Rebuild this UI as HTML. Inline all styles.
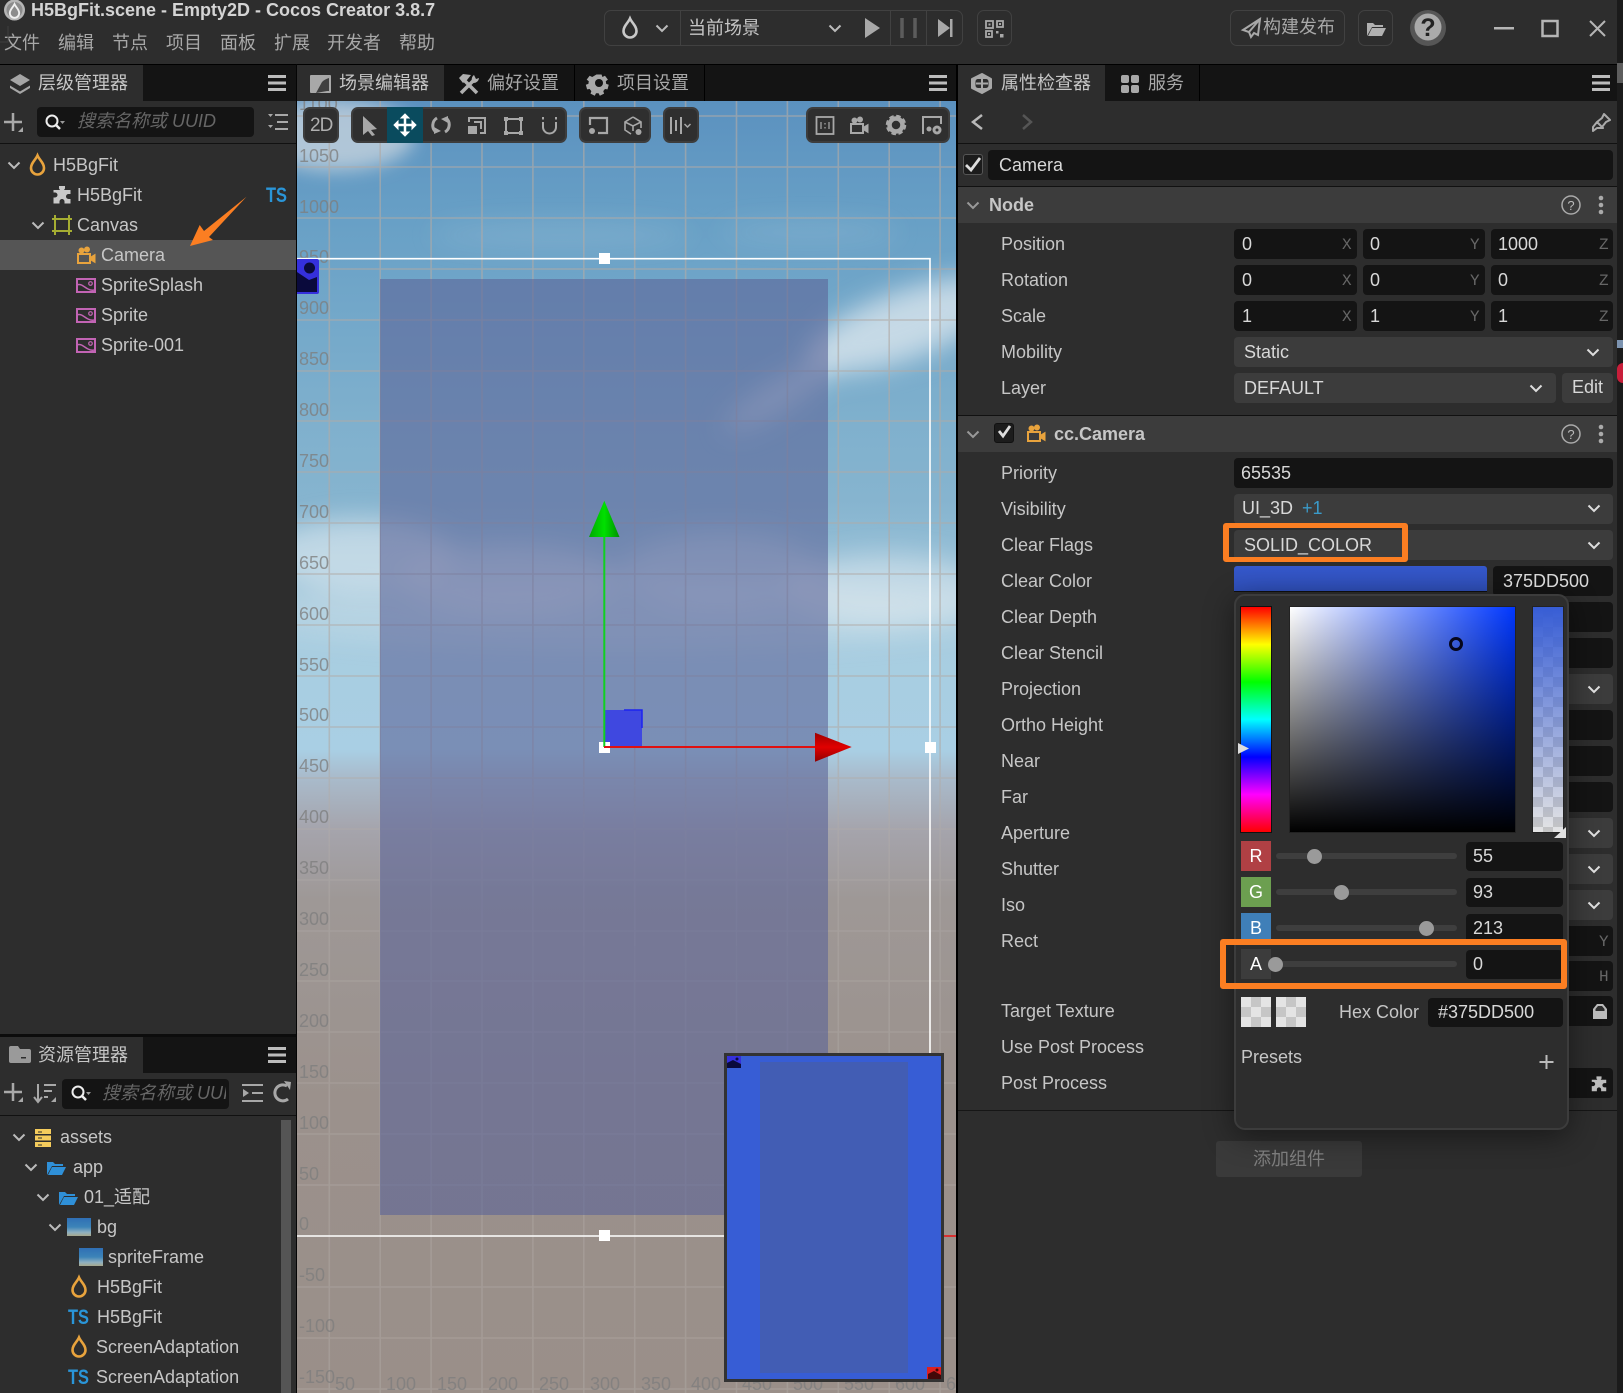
<!DOCTYPE html>
<html><head><meta charset="utf-8"><title>H5BgFit.scene - Cocos Creator</title>
<style>
html,body{margin:0;padding:0;width:1623px;height:1393px;overflow:hidden;background:#2d2d2d}
body{position:relative;font:18px/20px "Liberation Sans","Noto Sans CJK SC",sans-serif;color:#c6c6c6}
.a{position:absolute}
.t{position:absolute;white-space:nowrap;line-height:20px}
.f{position:absolute;background:#141414;border-radius:4px;height:30px}
.s{position:absolute;background:#3c3c3c;border-radius:4px;height:30px}
.v{color:#d8d8d8}
.m{font-family:"Liberation Mono",monospace;font-size:16px;color:#666}
.w{color:#a8a8a8}
.g{position:absolute;background:#2f2f2f;border:2px solid #3d3d3d;border-radius:7px;box-sizing:border-box;height:36px;top:107px}
.b{position:absolute;border:1px solid #414141;border-radius:7px;box-sizing:border-box}
.sl{position:absolute;left:1276px;width:181px;height:6px;background:#3e3e3e;border-radius:3px}
.th{position:absolute;width:15px;height:15px;border-radius:50%;background:#9a9a9a}
.ck{background:conic-gradient(#c6c6c6 25%,#e4e4e4 0 50%,#c6c6c6 0 75%,#e4e4e4 0);background-size:20px 20px}
svg{position:absolute;left:0;top:0;overflow:visible}
</style></head><body>

<!-- bars -->
<div class="a" style="left:0;top:0;width:1617px;height:64px;background:#2d2d2d"></div>
<div class="a" style="left:1617px;top:0;width:6px;height:1393px;background:#1b1b1b"></div>
<div class="a" style="left:1617px;top:63px;width:6px;height:20px;background:#8a8a8a;opacity:.6"></div>
<div class="a" style="left:1617px;top:340px;width:6px;height:8px;background:#7c93b0"></div>
<div class="a" style="left:1617px;top:363px;width:6px;height:20px;background:#c81e3a;border-radius:10px 0 0 10px"></div>
<div class="a" style="left:0;top:64px;width:1617px;height:37px;background:#141414;border-top:1px solid #000;box-sizing:border-box"></div>

<!-- left panels -->
<div class="a" style="left:0;top:101px;width:296px;height:1292px;background:#2d2d2d"></div>
<div class="a" style="left:0;top:65px;width:143px;height:36px;background:#2d2d2d"></div>
<div class="a" style="left:0;top:143px;width:296px;height:1px;background:#111"></div>
<div class="a" style="left:0;top:240px;width:296px;height:30px;background:#555"></div>
<div class="a" style="left:0;top:1034px;width:296px;height:3px;background:#0c0c0c"></div>
<div class="a" style="left:0;top:1037px;width:296px;height:36px;background:#141414"></div>
<div class="a" style="left:0;top:1037px;width:143px;height:36px;background:#2d2d2d"></div>
<div class="a" style="left:0;top:1115px;width:296px;height:1px;background:#111"></div>
<div class="f" style="left:37px;top:107px;width:217px"></div>
<div class="f" style="left:62px;top:1079px;width:167px"></div>
<div class="a" style="left:281px;top:1120px;width:10px;height:273px;background:#555"></div>
<div class="a" style="left:296px;top:64px;width:1px;height:1329px;background:#050505"></div>

<!-- scene tabs -->
<div class="a" style="left:297px;top:65px;width:147px;height:36px;background:#2d2d2d"></div>
<div class="a" style="left:574px;top:65px;width:1px;height:36px;background:#000"></div>
<div class="a" style="left:704px;top:65px;width:1px;height:36px;background:#000"></div>

<!-- scene -->
<div class="a" style="left:297px;top:101px;width:659px;height:1292px;overflow:hidden;background:linear-gradient(180deg,#5b91bf 0,#68a0c6 119px,#7fb0cd 319px,#86b4cf 399px,#a8cde0 539px,#a9cfe4 649px,#a9bccd 674px,#a5a4ac 729px,#9e9896 799px,#9b918c 999px,#9a8f89 1292px)">
<svg width="659" height="1292" viewBox="297 101 659 1292" style="font-family:'Liberation Sans',sans-serif">
<defs>
<filter id="b1" x="-50%" y="-80%" width="200%" height="260%"><feGaussianBlur stdDeviation="13"/></filter>
<filter id="b2" x="-50%" y="-50%" width="200%" height="200%"><feGaussianBlur stdDeviation="9"/></filter>
<linearGradient id="gc" x1="0" x2="1" y1="0" y2="0"><stop offset="0" stop-color="#00a800"/><stop offset=".5" stop-color="#00e000"/><stop offset="1" stop-color="#009000"/></linearGradient>
<linearGradient id="rc" x1="0" x2="0" y1="0" y2="1"><stop offset="0" stop-color="#a00000"/><stop offset=".5" stop-color="#e00000"/><stop offset="1" stop-color="#900000"/></linearGradient>
<linearGradient id="gl" gradientUnits="userSpaceOnUse" x1="0" x2="0" y1="101" y2="1393"><stop offset="0" stop-color="#b0aaa6" stop-opacity=".65"/><stop offset=".5" stop-color="#b0aaa6" stop-opacity=".6"/><stop offset=".58" stop-color="#b4aeaa" stop-opacity=".35"/><stop offset="1" stop-color="#b4aeaa" stop-opacity=".4"/></linearGradient>
</defs>
<g filter="url(#b2)">
<ellipse cx="335" cy="135" rx="80" ry="36" fill="#e6e6e6" opacity=".6"/>
</g>
<g filter="url(#b1)" fill="#e8eef2">
<ellipse cx="560" cy="235" rx="130" ry="12" opacity=".14"/>
<ellipse cx="810" cy="232" rx="90" ry="10" opacity=".14"/>
<ellipse cx="905" cy="325" rx="105" ry="34" opacity=".7" transform="rotate(-20 905 325)"/>
<ellipse cx="780" cy="395" rx="65" ry="16" opacity=".5" transform="rotate(-32 780 395)"/>
<ellipse cx="360" cy="555" rx="95" ry="36" opacity=".55"/>
<ellipse cx="510" cy="580" rx="110" ry="36" opacity=".5"/>
<ellipse cx="720" cy="572" rx="100" ry="40" opacity=".42"/>
<ellipse cx="885" cy="590" rx="100" ry="36" opacity=".5"/>
<ellipse cx="620" cy="612" rx="380" ry="34" opacity=".3"/>
</g>
<path d="M329.3 101V1393M380.2 101V1393M431.1 101V1393M482 101V1393M532.9 101V1393M583.8 101V1393M634.7 101V1393M685.6 101V1393M736.5 101V1393M787.4 101V1393M838.3 101V1393M889.2 101V1393M940.1 101V1393M297 116H956M297 167H956M297 218H956M297 269H956M297 320H956M297 371H956M297 421H956M297 472H956M297 523H956M297 574H956M297 625H956M297 676H956M297 727H956M297 778H956M297 829H956M297 880H956M297 931H956M297 981H956M297 1032H956M297 1083H956M297 1134H956M297 1185H956M297 1287H956M297 1338H956M297 1389H956" stroke="url(#gl)" stroke-width="1.600" fill="none"/>
<g fill="#7d7d7d" fill-opacity=".78" font-size="18">
<text x="299" y="110">1100</text><text x="299" y="162">1050</text><text x="299" y="213">1000</text><text x="299" y="263">950</text><text x="299" y="314">900</text><text x="299" y="365">850</text><text x="299" y="416">800</text><text x="299" y="467">750</text><text x="299" y="518">700</text><text x="299" y="569">650</text><text x="299" y="620">600</text><text x="299" y="671">550</text><text x="299" y="721">500</text><text x="299" y="772">450</text><text x="299" y="823">400</text><text x="299" y="874">350</text><text x="299" y="925">300</text><text x="299" y="976">250</text><text x="299" y="1027">200</text><text x="299" y="1078">150</text><text x="299" y="1129">100</text><text x="299" y="1180">50</text><text x="299" y="1230">0</text><text x="299" y="1281">-50</text><text x="299" y="1332">-100</text><text x="299" y="1383">-150</text>
<text x="335" y="1390">50</text><text x="386" y="1390">100</text><text x="437" y="1390">150</text><text x="488" y="1390">200</text><text x="539" y="1390">250</text><text x="590" y="1390">300</text><text x="641" y="1390">350</text><text x="691" y="1390">400</text><text x="742" y="1390">450</text><text x="793" y="1390">500</text><text x="844" y="1390">550</text><text x="895" y="1390">600</text><text x="946" y="1390">650</text>
</g>
<rect x="380" y="279" width="448" height="936" fill="#5c6498" fill-opacity=".6"/>
<!-- canvas rect -->
<path d="M297 258.700H930V1060M297 1236H730" stroke="#fff" stroke-width="1.600" fill="none"/>
<path d="M944 1236H956" stroke="#d83030" stroke-width="2"/>
<rect x="599" y="253" width="11" height="11" fill="#fff"/>
<rect x="925" y="742" width="11" height="11" fill="#fff"/>
<rect x="599" y="1230" width="11" height="11" fill="#fff"/>
<!-- left blue sprite icon -->
<rect x="296" y="259" width="23" height="35" rx="2" fill="#3530dc"/>
<path d="M297 272L309 280L317 277V292H297Z" fill="#0a0a3c"/><circle cx="309.500" cy="268" r="5.500" fill="#0a0a3c"/>
<!-- gizmo -->
<rect x="605" y="710" width="37" height="37" fill="#3f48e0"/>
<path d="M624 710H642V728" stroke="#1c22f0" stroke-width="1.500" fill="none"/>
<rect x="599" y="742" width="11" height="11" fill="#fff"/>
<path d="M604.300 537V747" stroke="#10d020" stroke-width="2"/>
<path d="M604 747H816" stroke="#e01010" stroke-width="2"/>
<polygon points="604.300,500.700 619.500,537 589,537" fill="url(#gc)"/>
<polygon points="815,732.700 851.700,747 815,761.700" fill="url(#rc)"/>
</svg>
</div>

<!-- preview -->
<div class="a" style="left:724px;top:1053px;width:220px;height:329px;box-sizing:border-box;border:3px solid #333;background:#375dd5"></div>
<div class="a" style="left:760px;top:1062px;width:148px;height:311px;background:#425db4"></div>
<div class="a" style="left:727px;top:1056px;width:14px;height:12px;background:#3530dc"></div>
<div class="a" style="left:927px;top:1367px;width:14px;height:12px;background:#dd2020"></div>
<div class="a" style="left:956px;top:64px;width:2px;height:1329px;background:#000"></div>

<!-- scene toolbars -->
<div class="g" style="left:303px;width:36px"></div>
<div class="g" style="left:351px;width:216px"></div>
<div class="a" style="left:387px;top:107px;width:36px;height:36px;background:#0a4b5e"></div>
<div class="g" style="left:579px;width:72px"></div>
<div class="g" style="left:663px;width:36px"></div>
<div class="g" style="left:806px;width:144px"></div>

<!-- top bar boxes -->
<div class="b" style="left:604px;top:10px;width:359px;height:36px"></div>
<div class="a" style="left:680px;top:11px;width:1px;height:34px;background:#414141"></div>
<div class="a" style="left:890px;top:11px;width:1px;height:34px;background:#414141"></div>
<div class="a" style="left:926px;top:11px;width:1px;height:34px;background:#414141"></div>
<div class="b" style="left:977px;top:10px;width:35px;height:36px"></div>
<div class="b" style="left:1230px;top:10px;width:115px;height:36px"></div>
<div class="b" style="left:1358px;top:10px;width:35px;height:36px"></div>

<!-- right panel -->
<div class="a" style="left:958px;top:101px;width:659px;height:1292px;background:#2d2d2d"></div>
<div class="a" style="left:958px;top:65px;width:147px;height:36px;background:#2d2d2d"></div>
<div class="a" style="left:1199px;top:65px;width:1px;height:36px;background:#000"></div>
<div class="a" style="left:958px;top:143px;width:659px;height:1px;background:#111"></div>
<div class="a" style="left:958px;top:186px;width:659px;height:1px;background:#111"></div>
<div class="a" style="left:958px;top:187px;width:659px;height:36px;background:#3c3c3c"></div>
<div class="a" style="left:958px;top:415px;width:659px;height:1px;background:#111"></div>
<div class="a" style="left:958px;top:416px;width:659px;height:36px;background:#3c3c3c"></div>
<div class="a" style="left:958px;top:1110px;width:659px;height:1px;background:#161616"></div>
<div class="f" style="left:988px;top:150px;width:625px"></div>
<div class="a" style="left:963px;top:154px;width:20px;height:21px;box-sizing:border-box;background:#1c1c1c;border:1px solid #555;border-radius:3px"></div>
<div class="a" style="left:994px;top:423px;width:20px;height:20px;box-sizing:border-box;background:#1c1c1c;border:1px solid #111;border-radius:3px"></div>

<div class="f" style="left:1234px;top:229px;width:123px"></div><div class="f" style="left:1363px;top:229px;width:122px"></div><div class="f" style="left:1491px;top:229px;width:122px"></div>
<div class="f" style="left:1234px;top:265px;width:123px"></div><div class="f" style="left:1363px;top:265px;width:122px"></div><div class="f" style="left:1491px;top:265px;width:122px"></div>
<div class="f" style="left:1234px;top:301px;width:123px"></div><div class="f" style="left:1363px;top:301px;width:122px"></div><div class="f" style="left:1491px;top:301px;width:122px"></div>
<div class="s" style="left:1234px;top:337px;width:379px"></div>
<div class="s" style="left:1234px;top:373px;width:322px"></div>
<div class="s" style="left:1562px;top:373px;width:51px"></div>
<div class="f" style="left:1234px;top:458px;width:379px"></div>
<div class="s" style="left:1234px;top:494px;width:379px"></div>
<div class="s" style="left:1234px;top:530px;width:379px"></div>
<div class="a" style="left:1234px;top:566px;width:253px;height:25px;background:linear-gradient(180deg,#3558cc,#2f4fb8);border-bottom:1px solid #111;border-radius:3px 3px 0 0"></div>
<div class="f" style="left:1493px;top:566px;width:120px"></div>
<div class="f" style="left:1500px;top:602px;width:113px"></div><div class="f" style="left:1500px;top:638px;width:113px"></div>
<div class="s" style="left:1500px;top:674px;width:113px"></div>
<div class="f" style="left:1500px;top:710px;width:113px"></div><div class="f" style="left:1500px;top:746px;width:113px"></div><div class="f" style="left:1500px;top:782px;width:113px"></div>
<div class="s" style="left:1500px;top:818px;width:113px"></div><div class="s" style="left:1500px;top:854px;width:113px"></div><div class="s" style="left:1500px;top:890px;width:113px"></div>
<div class="f" style="left:1500px;top:926px;width:113px"></div><div class="f" style="left:1500px;top:961px;width:113px"></div><div class="f" style="left:1500px;top:996px;width:113px"></div><div class="f" style="left:1500px;top:1068px;width:113px"></div>
<div class="a" style="left:1216px;top:1141px;width:146px;height:36px;background:#3a3a3a;border-radius:3px"></div>

<!-- popup -->
<div class="a" style="left:1234px;top:594px;width:335px;height:536px;box-sizing:border-box;background:#2d2d2d;border:2px solid #3c3c3c;border-radius:11px;box-shadow:0 6px 30px rgba(0,0,0,.45)"></div>
<div class="a" style="left:1241px;top:607px;width:30px;height:225px;background:linear-gradient(180deg,#f00 0,#ff0 16.67%,#0f0 33.33%,#0ff 50%,#00f 66.67%,#f0f 83.33%,#f00 100%);outline:1px solid #111"></div>
<div class="a" style="left:1290px;top:607px;width:225px;height:225px;background:linear-gradient(180deg,transparent,#000),linear-gradient(90deg,#fff,#0037ff);outline:1px solid #222"></div>
<div class="a ck" style="left:1533px;top:607px;width:30px;height:225px;outline:1px solid #222"></div>
<div class="a" style="left:1533px;top:607px;width:30px;height:225px;background:linear-gradient(180deg,#375dd5,rgba(55,93,213,0))"></div>
<div class="a" style="left:1449px;top:637px;width:14px;height:14px;box-sizing:border-box;border:3px solid #06061c;border-radius:50%"></div>

<div class="a" style="left:1241px;top:841px;width:30px;height:30px;background:#b04044"></div>
<div class="a" style="left:1241px;top:877px;width:30px;height:30px;background:#6c9f50"></div>
<div class="a" style="left:1241px;top:913px;width:30px;height:30px;background:#3f7fb8"></div>
<div class="a" style="left:1241px;top:949px;width:30px;height:30px;background:#3c3c3c"></div>
<div class="sl" style="top:853px"></div><div class="sl" style="top:889px"></div><div class="sl" style="top:925px"></div><div class="sl" style="top:961px"></div>
<div class="th" style="left:1307px;top:849px"></div><div class="th" style="left:1334px;top:885px"></div><div class="th" style="left:1419px;top:921px"></div><div class="th" style="left:1268px;top:957px"></div>
<div class="f" style="left:1466px;top:842px;width:97px;height:29px"></div><div class="f" style="left:1466px;top:878px;width:97px;height:29px"></div><div class="f" style="left:1466px;top:914px;width:97px;height:29px"></div><div class="f" style="left:1466px;top:950px;width:97px;height:29px"></div>
<div class="a ck" style="left:1241px;top:997px;width:30px;height:30px"></div>
<div class="a ck" style="left:1276px;top:997px;width:30px;height:30px"></div>
<div class="f" style="left:1428px;top:998px;width:135px;height:29px"></div>

<!-- text -->
<div class="t" style="left:31px;top:0;font-weight:bold;color:#d4d4d4;font-size:18px">H5BgFit.scene - Empty2D - Cocos Creator 3.8.7</div>
<div class="t w" style="left:4px;top:33px">文件</div><div class="t w" style="left:58px;top:33px">编辑</div><div class="t w" style="left:112px;top:33px">节点</div><div class="t w" style="left:166px;top:33px">项目</div><div class="t w" style="left:220px;top:33px">面板</div><div class="t w" style="left:274px;top:33px">扩展</div><div class="t w" style="left:327px;top:33px">开发者</div><div class="t w" style="left:399px;top:33px">帮助</div>
<div class="t" style="left:688px;top:18px">当前场景</div>
<div class="t w" style="left:1263px;top:17px">构建发布</div>

<div class="t" style="left:38px;top:73px">层级管理器</div>
<div class="t" style="left:339px;top:73px">场景编辑器</div>
<div class="t w" style="left:487px;top:73px">偏好设置</div>
<div class="t w" style="left:617px;top:73px">项目设置</div>
<div class="t" style="left:1001px;top:73px">属性检查器</div>
<div class="t w" style="left:1148px;top:73px">服务</div>
<div class="t" style="left:38px;top:1045px">资源管理器</div>

<div class="t" style="left:77px;top:111px;font-style:italic;color:#666">搜索名称或 UUID</div>
<div class="t" style="left:102px;top:1083px;width:124px;overflow:hidden;font-style:italic;color:#666">搜索名称或 UUID</div>

<div class="t" style="left:53px;top:155px">H5BgFit</div>
<div class="t" style="left:77px;top:185px">H5BgFit</div>
<div class="t" style="left:77px;top:215px">Canvas</div>
<div class="t" style="left:101px;top:245px">Camera</div>
<div class="t" style="left:101px;top:275px">SpriteSplash</div>
<div class="t" style="left:101px;top:305px">Sprite</div>
<div class="t" style="left:101px;top:335px">Sprite-001</div>

<div class="t" style="left:60px;top:1127px">assets</div>
<div class="t" style="left:73px;top:1157px">app</div>
<div class="t" style="left:84px;top:1187px">01_适配</div>
<div class="t" style="left:97px;top:1217px">bg</div>
<div class="t" style="left:108px;top:1247px">spriteFrame</div>
<div class="t" style="left:97px;top:1277px">H5BgFit</div>
<div class="t" style="left:97px;top:1307px">H5BgFit</div>
<div class="t" style="left:96px;top:1337px">ScreenAdaptation</div>
<div class="t" style="left:96px;top:1367px">ScreenAdaptation</div>

<div class="t v" style="left:999px;top:155px">Camera</div>
<div class="t" style="left:989px;top:195px;font-weight:bold">Node</div>
<div class="t" style="left:1054px;top:424px;font-weight:bold">cc.Camera</div>

<div class="t" style="left:1001px;top:234px">Position</div>
<div class="t" style="left:1001px;top:270px">Rotation</div>
<div class="t" style="left:1001px;top:306px">Scale</div>
<div class="t" style="left:1001px;top:342px">Mobility</div>
<div class="t" style="left:1001px;top:378px">Layer</div>
<div class="t" style="left:1001px;top:463px">Priority</div>
<div class="t" style="left:1001px;top:499px">Visibility</div>
<div class="t" style="left:1001px;top:535px">Clear Flags</div>
<div class="t" style="left:1001px;top:571px">Clear Color</div>
<div class="t" style="left:1001px;top:607px">Clear Depth</div>
<div class="t" style="left:1001px;top:643px">Clear Stencil</div>
<div class="t" style="left:1001px;top:679px">Projection</div>
<div class="t" style="left:1001px;top:715px">Ortho Height</div>
<div class="t" style="left:1001px;top:751px">Near</div>
<div class="t" style="left:1001px;top:787px">Far</div>
<div class="t" style="left:1001px;top:823px">Aperture</div>
<div class="t" style="left:1001px;top:859px">Shutter</div>
<div class="t" style="left:1001px;top:895px">Iso</div>
<div class="t" style="left:1001px;top:931px">Rect</div>
<div class="t" style="left:1001px;top:1001px">Target Texture</div>
<div class="t" style="left:1001px;top:1037px">Use Post Process</div>
<div class="t" style="left:1001px;top:1073px">Post Process</div>

<div class="t v" style="left:1242px;top:234px">0</div><div class="t v" style="left:1370px;top:234px">0</div><div class="t v" style="left:1498px;top:234px">1000</div>
<div class="t v" style="left:1242px;top:270px">0</div><div class="t v" style="left:1370px;top:270px">0</div><div class="t v" style="left:1498px;top:270px">0</div>
<div class="t v" style="left:1242px;top:306px">1</div><div class="t v" style="left:1370px;top:306px">1</div><div class="t v" style="left:1498px;top:306px">1</div>
<div class="t m" style="left:1342px;top:235px">X</div><div class="t m" style="left:1470px;top:235px">Y</div><div class="t m" style="left:1599px;top:235px">Z</div>
<div class="t m" style="left:1342px;top:271px">X</div><div class="t m" style="left:1470px;top:271px">Y</div><div class="t m" style="left:1599px;top:271px">Z</div>
<div class="t m" style="left:1342px;top:307px">X</div><div class="t m" style="left:1470px;top:307px">Y</div><div class="t m" style="left:1599px;top:307px">Z</div>
<div class="t m" style="left:1599px;top:932px">Y</div><div class="t m" style="left:1599px;top:967px">H</div>
<div class="t v" style="left:1244px;top:342px">Static</div>
<div class="t v" style="left:1244px;top:378px">DEFAULT</div>
<div class="t v" style="left:1572px;top:377px">Edit</div>
<div class="t v" style="left:1241px;top:463px">65535</div>
<div class="t v" style="left:1242px;top:498px">UI_3D</div><div class="t" style="left:1302px;top:498px;color:#3a9ac9">+1</div>
<div class="t v" style="left:1244px;top:535px">SOLID_COLOR</div>
<div class="t v" style="left:1503px;top:571px">375DD500</div>
<div class="t" style="left:1241px;top:846px;width:30px;text-align:center;color:#fff">R</div>
<div class="t" style="left:1241px;top:882px;width:30px;text-align:center;color:#fff">G</div>
<div class="t" style="left:1241px;top:918px;width:30px;text-align:center;color:#fff">B</div>
<div class="t" style="left:1241px;top:954px;width:30px;text-align:center;color:#fff">A</div>
<div class="t v" style="left:1473px;top:846px">55</div>
<div class="t v" style="left:1473px;top:882px">93</div>
<div class="t v" style="left:1473px;top:918px">213</div>
<div class="t v" style="left:1473px;top:954px">0</div>
<div class="t" style="left:1339px;top:1002px">Hex Color</div>
<div class="t v" style="left:1438px;top:1002px">#375DD500</div>
<div class="t" style="left:1241px;top:1047px">Presets</div>
<div class="t" style="left:1216px;top:1149px;width:146px;text-align:center;color:#7c7c7c">添加组件</div>
<div class="t" style="left:310px;top:116px;color:#b0b0b0;font-size:19px;letter-spacing:-1px">2D</div>

<!-- orange boxes -->
<div class="a" style="left:1223px;top:523px;width:185px;height:39px;box-sizing:border-box;border:5px solid #fb7e22;border-left-width:6px;border-right-width:6px;border-radius:3px"></div>
<div class="a" style="left:1220px;top:939px;width:347px;height:50px;box-sizing:border-box;border:6.500px solid #fb7e22;border-radius:3px"></div>

<!-- icons -->
<svg width="1623" height="1393" viewBox="0 0 1623 1393" font-family="'Liberation Sans',sans-serif">
<defs>
<path id="drop" d="M0-9.500C2-5 6.500-2 6.500 3A6.500 6.500 0 0 1-6.500 3C-6.500-2-2-5 0-9.500Z" fill="none" stroke-width="2.600"/>
<path id="ham" d="M0 0h18v3H0zM0 6.500h18v3H0zM0 13h18v3H0z" fill="#bcbcbc"/>
<path id="chev" d="M-5.500-2.500L0 3L5.500-2.500" fill="none" stroke-width="2"/>
<g id="spr"><rect x="1" y="1" width="18" height="13" fill="none" stroke="#c264b4" stroke-width="2"/><path d="M1 7C5 5 8 9 12 11S17 12 19 12" fill="none" stroke="#c264b4" stroke-width="1.500"/><circle cx="14.500" cy="5.500" r="1.800" fill="none" stroke="#c264b4" stroke-width="1.200"/></g>
<path id="puz" d="M-3-9H3V-6.500L2-5H8.500V-1H6.500A2.500 2.500 0 0 0 6.500 4H8.500V8.500H2.500V6.500A2.500 2.500 0 0 0-2.500 6.500V8.500H-8.500V2.500H-7A2.500 2.500 0 0 0-7-2.500H-8.500V-5H-2L-3-6.500Z"/>
<g id="cam"><rect x="1" y="7" width="12" height="9" fill="none" stroke-width="2"/><circle cx="4.500" cy="3.500" r="2.500" /><circle cx="10" cy="2.500" r="2.500"/><path d="M13 10.500L18 7.500V15.500L13 12.500Z"/></g>
<path id="fold" d="M1 15V2H7L9 4H17V6H6L1 15ZM6 7H20L16 15H2Z"/>
<g id="tsi"><text font-size="21" font-weight="bold" fill="#2a95d8" textLength="21" lengthAdjust="spacingAndGlyphs">TS</text></g>
<path id="gear" d="M-3-10h6l1 3 3-1.500 3.500 4.500-2.500 2 .5 3 3 1-1.500 5.500-3-.5-2 2.500 1 3-5 2.500-1.500-3h-3l-1.500 3-5-2.500 1-3-2-2.500-3 .5-1.500-5.500 3-1 .5-3-2.500-2 3.500-4.500 3 1.500z" fill-rule="evenodd"/>
<linearGradient id="th" x1="0" x2="0" y1="0" y2="1"><stop offset="0" stop-color="#2f6fb5"/><stop offset=".5" stop-color="#3c84b8"/><stop offset=".8" stop-color="#8fb0c0"/><stop offset="1" stop-color="#a8a88c"/></linearGradient>
</defs>

<!-- title logo -->
<circle cx="14.500" cy="10" r="10.500" fill="#b5b5b5"/><circle cx="14.500" cy="10" r="8" fill="#8c8c8c"/>
<use href="#drop" transform="translate(14.500,11) scale(.72)" stroke="#f0f0f0"/>
<!-- menu artefact -->
<path d="M8 26V42H0" stroke="#3e3e3e" fill="none"/>

<!-- top toolbar icons -->
<use href="#drop" x="630" y="28" stroke="#c8c8c8"/>
<use href="#chev" x="662" y="28" stroke="#bbb"/>
<use href="#chev" x="835" y="28" stroke="#bbb"/>
<polygon points="865,18 880,28 865,38" fill="#a8a8a8"/>
<path d="M902 18v20M915 18v20" stroke="#5c5c5c" stroke-width="3.500"/>
<polygon points="938,19 950,28 938,37" fill="#a8a8a8"/><rect x="950" y="19" width="2.500" height="18" fill="#a8a8a8"/>
<g fill="none" stroke="#a8a8a8" stroke-width="1.800"><rect x="986" y="21" width="7" height="7"/><rect x="997" y="21" width="6" height="6"/><rect x="986" y="31" width="6" height="6"/></g><g fill="#a8a8a8"><rect x="988.500" y="23.500" width="2" height="2"/><rect x="999" y="23" width="2" height="2"/><rect x="988" y="33" width="2" height="2"/><rect x="996" y="31" width="2.500" height="2.500"/><rect x="1000" y="34" width="3.500" height="3.500"/></g>
<path d="M1260 19L1243 30L1249 32L1251 37L1254 33L1258 35Z M1260 19L1249 32" fill="none" stroke="#a8a8a8" stroke-width="2"/>
<use href="#fold" x="1366" y="21" fill="#b0b0b0"/>
<circle cx="1428" cy="28" r="18" fill="#565656"/><circle cx="1428" cy="27" r="13.500" fill="#aaa"/><text x="1428" y="36" font-size="25" font-weight="bold" text-anchor="middle" fill="#222">?</text>
<rect x="1494" y="27" width="20" height="2.500" fill="#b5b5b5"/>
<rect x="1542.500" y="21" width="15" height="15" fill="none" stroke="#b5b5b5" stroke-width="2.500"/>
<path d="M1590 21L1605 36M1605 21L1590 36" stroke="#b5b5b5" stroke-width="2"/>

<!-- tab icons -->
<path d="M10 80L20 74L30 80L20 86Z" fill="#a6a6a6"/><path d="M10 84.500L20 90.500L30 84.500V87L20 93L10 87Z" fill="#a6a6a6" transform="translate(0,1)"/>
<use href="#ham" x="268" y="75"/><use href="#ham" x="929" y="75"/><use href="#ham" x="1592" y="75"/><use href="#ham" x="268" y="1047"/>
<rect x="310" y="75" width="21" height="18" rx="1" fill="#a8a8a8"/><path d="M316 93L322 82C324 80 326 79 329 78V91H327Z" fill="#2d2d2d" opacity=".85"/>
<!-- tools -->
<path d="M461 93L474 80" stroke="#b0b0b0" stroke-width="3.500"/><path d="M477 93L465 81" stroke="#b0b0b0" stroke-width="3.500"/>
<path d="M459 78L463 74L471 75L467 80L463 83Z" fill="#b0b0b0"/>
<path d="M473 83A5.500 5.500 0 0 1 474 75L476 79L479 78A5.500 5.500 0 0 1 473 83Z" fill="#b0b0b0"/>
<use href="#gear" transform="translate(599,83) scale(.85)" fill="#a8a8a8"/><circle cx="599" cy="83" r="4" fill="#141414"/>
<path d="M982 74L991 79V88L982 93L972 88V79Z" fill="#a8a8a8" stroke="#a8a8a8" stroke-linejoin="round" stroke-width="2"/><rect x="975.500" y="79" width="13" height="9" rx="2.500" fill="#2d2d2d"/><path d="M976 83.500H988M982 79V88" stroke="#a8a8a8" stroke-width="2"/>
<g fill="#a8a8a8"><rect x="1121" y="75" width="8" height="8" rx="2"/><rect x="1131" y="75" width="8" height="8" rx="2"/><rect x="1121" y="85" width="8" height="8" rx="2"/><rect x="1131" y="85" width="8" height="8" rx="2"/></g>
<!-- assets tab folder -->
<path d="M9 1048A2 2 0 0 1 11 1046H18L20 1049H29A2 2 0 0 1 31 1051V1061A2 2 0 0 1 29 1063H11A2 2 0 0 1 9 1061Z" fill="#9a9a9a"/><rect x="21" y="1057" width="5" height="1.500" fill="#2d2d2d"/>

<!-- hierarchy toolbar -->
<path d="M13 113V131M4 122H22" stroke="#a8a8a8" stroke-width="2.500"/><polygon points="23,127 23,132 18,132" fill="#a8a8a8"/>
<circle cx="52" cy="121" r="5.500" fill="none" stroke="#eee" stroke-width="2"/><path d="M56 125L60 129" stroke="#eee" stroke-width="2.500"/><polygon points="60,121 65,121 62.500,124" fill="#999"/>
<path d="M275 115H288M277 122H288M275 129H288" stroke="#a8a8a8" stroke-width="2"/><path d="M268 114H273L270.500 117ZM268 125H273L270.500 128Z" fill="#a8a8a8"/>

<!-- hierarchy tree -->
<use href="#chev" x="14" y="165" stroke="#bbb"/><use href="#drop" x="37.500" y="165" stroke="#e8a33d"/>
<use href="#puz" x="62" y="195" fill="#c8c8c8"/>
<use href="#tsi" x="266" y="202"/>
<use href="#chev" x="38" y="225" stroke="#bbb"/>
<path d="M52 219H72M52 231H72M55 215V235M69 215V235" stroke="#a5ad32" stroke-width="2"/>
<use href="#cam" x="77" y="247" stroke="#e8a33d" fill="#e8a33d"/>
<rect x="78" y="254" width="12" height="9" fill="#555" stroke="#e8a33d" stroke-width="2"/>
<use href="#spr" x="76" y="278"/><use href="#spr" x="76" y="308"/><use href="#spr" x="76" y="338"/>
<polygon points="190,246 199.700,225 204,231 246.500,196.700 209,237 213,240" fill="#fb7e22"/>

<!-- assets toolbar -->
<path d="M13 1083V1101M4 1092H22" stroke="#a8a8a8" stroke-width="2.500"/><polygon points="23,1097 23,1102 18,1102" fill="#a8a8a8"/>
<path d="M38 1084V1101M34 1097L38 1102L42 1097M44 1085H56M44 1091H52M44 1097H48" stroke="#a8a8a8" stroke-width="2" fill="none"/><polygon points="56,1097 56,1102 51,1102" fill="#a8a8a8"/>
<circle cx="78" cy="1092" r="5.500" fill="none" stroke="#eee" stroke-width="2"/><path d="M82 1096L86 1100" stroke="#eee" stroke-width="2.500"/><polygon points="86,1092 91,1092 88.500,1095" fill="#999"/>
<path d="M242 1085H263M252 1093H263M242 1101H263" stroke="#a8a8a8" stroke-width="2"/><polygon points="243,1089 249,1093 243,1097" fill="#a8a8a8"/>
<path d="M288 1099A8 8 0 1 1 287 1086" fill="none" stroke="#a8a8a8" stroke-width="3"/><polygon points="284,1081 291,1082 290,1090" fill="#a8a8a8"/>

<!-- asset tree -->
<use href="#chev" x="19" y="1137" stroke="#bbb"/>
<path d="M35 1129H51V1134H35ZM35 1135.500H51V1140.500H35ZM35 1142H51V1147H35Z" fill="#f5cc5c"/><path d="M38 1132H42M38 1138H42M38 1145H42" stroke="#2d2d2d" stroke-width="1"/>
<use href="#chev" x="31" y="1167" stroke="#bbb"/><use href="#fold" x="46" y="1160" fill="#2f90d8"/>
<use href="#chev" x="43" y="1197" stroke="#bbb"/><use href="#fold" x="58" y="1190" fill="#2f90d8"/>
<use href="#chev" x="55" y="1227" stroke="#bbb"/>
<rect x="67" y="1218" width="24" height="18" fill="url(#th)"/><rect x="79" y="1248" width="24" height="18" fill="url(#th)"/>
<use href="#drop" x="79" y="1287" stroke="#e8a33d"/><use href="#tsi" x="68" y="1324"/>
<use href="#drop" x="79" y="1347" stroke="#e8a33d"/><use href="#tsi" x="68" y="1384"/>

<!-- scene toolbar icons -->
<polygon points="363,116 377,129 371,130 375,135 372,136 368,131 363,135" fill="#a8a8a8"/>
<path d="M405 115V135M395 125H415" stroke="#fff" stroke-width="2.500"/><path d="M401 118L405 114L409 118ZM401 132L405 136L409 132ZM398 121L394 125L398 129ZM412 121L416 125L412 129Z" fill="#fff" stroke="#fff"/>
<path d="M436 132A8.500 8.500 0 0 1 437 118M446 118A8.500 8.500 0 0 1 445 132" fill="none" stroke="#a8a8a8" stroke-width="3"/><polygon points="434,134 441,131 434,127" fill="#a8a8a8"/><polygon points="448,116 441,119 448,123" fill="#a8a8a8"/>
<rect x="468" y="126" width="9" height="8" fill="#a8a8a8"/><path d="M469 122V118H485V133H480M474 122H481V129" fill="none" stroke="#a8a8a8" stroke-width="2"/>
<rect x="506" y="119" width="15" height="14" fill="none" stroke="#a8a8a8" stroke-width="2"/><g fill="#a8a8a8"><rect x="504" y="117" width="4" height="4"/><rect x="519" y="117" width="4" height="4"/><rect x="504" y="131" width="4" height="4"/><rect x="519" y="131" width="4" height="4"/></g>
<path d="M543 122V127A6.500 6.500 0 0 0 556 127V122" fill="none" stroke="#a8a8a8" stroke-width="2"/><path d="M543 117V119.500M556 117V119.500" stroke="#a8a8a8" stroke-width="2"/>
<path d="M590 125V118H607V133H598" fill="none" stroke="#a8a8a8" stroke-width="2.200"/><circle cx="592" cy="131" r="3" fill="#a8a8a8"/>
<path d="M633 117L641 122V128M633 117L625 122V130L631 134M625 122L633 126L641 122M633 126V131" fill="none" stroke="#a8a8a8" stroke-width="1.600"/><circle cx="638.500" cy="132" r="3" fill="#a8a8a8"/>
<path d="M671 117V134M676 120V131M681 117V134" stroke="#a8a8a8" stroke-width="2"/><path d="M684.500 124L687.500 127L690.500 124" fill="none" stroke="#a8a8a8" stroke-width="1.500"/>
<rect x="816.500" y="117" width="17" height="17" fill="none" stroke="#a8a8a8" stroke-width="1.800"/><path d="M821 122V129M829 122V129" stroke="#a8a8a8" stroke-width="1.200"/><path d="M825 123V124.500M825 127V128.500" stroke="#a8a8a8" stroke-width="1.200"/>
<use href="#cam" x="850" y="117" stroke="#a8a8a8" fill="#a8a8a8"/><rect x="851" y="124" width="12" height="9" fill="#2f2f2f" stroke="#a8a8a8" stroke-width="2"/>
<circle cx="896" cy="125" r="6.500" fill="none" stroke="#a8a8a8" stroke-width="4.500"/><circle cx="896" cy="125" r="9" fill="none" stroke="#a8a8a8" stroke-width="2.500" stroke-dasharray="4.500 2.560"/>
<path d="M923 134V117H941V124" fill="none" stroke="#a8a8a8" stroke-width="2"/><circle cx="929" cy="129" r="2.500" fill="#a8a8a8"/><circle cx="937" cy="130" r="4.500" fill="#a8a8a8"/><circle cx="937" cy="130" r="1.500" fill="#2f2f2f"/>

<!-- inspector -->
<path d="M982 115L973 122L982 129" fill="none" stroke="#b8b8b8" stroke-width="2.500"/>
<path d="M1023 115L1031 122L1023 129" fill="none" stroke="#555" stroke-width="2.500"/>
<path d="M1604 114L1610 120L1606 122L1602 127L1597 122L1602 118ZM1597 122L1603 128L1597 128L1593 131L1593 127Z" fill="#2d2d2d" stroke="#aaa" stroke-width="2" stroke-linejoin="round"/>
<path d="M966 165L971 170L980 158" fill="none" stroke="#ddd" stroke-width="2.800"/>
<path d="M999 431L1003 436L1010 426" fill="none" stroke="#ddd" stroke-width="2.800"/>
<use href="#chev" x="973" y="205" stroke="#999"/><use href="#chev" x="973" y="434" stroke="#999"/>
<g id="hp"><circle cx="1571" cy="205" r="9" fill="none" stroke="#aaa" stroke-width="1.500"/><text x="1571" y="210" text-anchor="middle" font-size="13" fill="#bbb">?</text><circle cx="1601" cy="198" r="2.300" fill="#aaa"/><circle cx="1601" cy="205" r="2.300" fill="#aaa"/><circle cx="1601" cy="212" r="2.300" fill="#aaa"/></g>
<use href="#hp" y="229"/>
<use href="#cam" x="1027" y="425" stroke="#e8a33d" fill="#e8a33d"/><rect x="1028" y="432" width="12" height="9" fill="#3c3c3c" stroke="#e8a33d" stroke-width="2"/>
<use href="#chev" x="1593" y="352" stroke="#ddd"/><use href="#chev" x="1536" y="388" stroke="#ddd"/>
<use href="#chev" x="1594" y="508" stroke="#ddd"/><use href="#chev" x="1594" y="545" stroke="#ddd"/>
<use href="#chev" x="1594" y="689" stroke="#ddd"/><use href="#chev" x="1594" y="833" stroke="#ddd"/><use href="#chev" x="1594" y="869" stroke="#ddd"/><use href="#chev" x="1594" y="905" stroke="#ddd"/>
<path d="M1593 1009L1597 1004H1603L1607 1009V1019H1593Z" fill="#bbb"/><path d="M1595.500 1009L1598 1006H1602L1604.500 1009V1011H1595.500Z" fill="#2d2d2d"/>
<use href="#puz" transform="translate(1599,1084) scale(.85)" fill="#bbb"/>
<!-- popup markers -->
<polygon points="1238,743 1249,748.500 1238,754" fill="#ddd"/>
<polygon points="1566,827 1554,838 1566,838" fill="#e0e0e0"/>
<path d="M1546.500 1055V1069M1539.500 1062H1553.500" stroke="#bbb" stroke-width="2"/>
<!-- preview mini icons -->
<path d="M727 1068V1063L733 1060L741 1064V1068Z" fill="#0a0a3c"/><circle cx="737" cy="1059" r="1.500" fill="#0a0a3c"/>
<path d="M928 1379V1374L934 1371L941 1375V1379Z" fill="#420808"/><circle cx="937" cy="1370" r="1.500" fill="#420808"/>
</svg>
</body></html>
